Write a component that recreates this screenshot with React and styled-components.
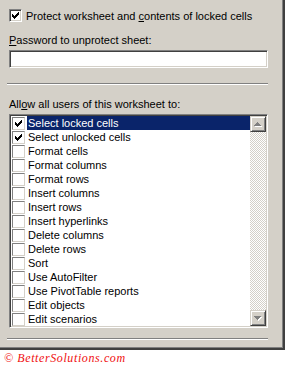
import React from 'react'
import styled, { createGlobalStyle } from 'styled-components'

const Global = createGlobalStyle`
  html, body {
    margin: 0;
    padding: 0;
    background: #ffffff;
  }
`

const Dialog = styled.div`
  box-sizing: border-box;
  width: 285px;
  height: 350px;
  background: #d4d0c8;
  border-right: 2px solid #404040;
  border-bottom: 2px solid #404040;
  box-shadow: inset -1px -1px 0 #808080;
  font-family: Tahoma, "Liberation Sans", Arial, sans-serif;
  font-size: 11px;
  color: #000;
  padding: 9px 0 0 9px;
  display: flex;
  flex-direction: column;
`

const CheckRow = styled.label`
  display: flex;
  align-items: center;
  gap: 4px;
  height: 13px;
`

const Box3D = styled.span`
  box-sizing: border-box;
  width: 13px;
  height: 13px;
  background: #fff;
  border-top: 1px solid #808080;
  border-left: 1px solid #808080;
  border-right: 1px solid #ffffff;
  border-bottom: 1px solid #ffffff;
  box-shadow: inset 1px 1px 0 #404040, inset -1px -1px 0 #d4d0c8;
  display: flex;
  align-items: center;
  justify-content: center;
  flex: none;
`

const Label = styled.div`
  margin-top: ${({ $top }) => $top}px;
  line-height: 14px;
  height: 14px;
  white-space: nowrap;
`

const Key = styled.span`
  text-decoration: underline;
`

const Input = styled.div`
  box-sizing: border-box;
  margin-top: 3px;
  width: 259px;
  height: 18px;
  background: #fff;
  border-top: 1px solid #808080;
  border-left: 1px solid #808080;
  border-right: 1px solid #ffffff;
  border-bottom: 1px solid #ffffff;
  box-shadow: inset 1px 1px 0 #404040, inset -1px -1px 0 #d4d0c8;
`

const Separator = styled.div`
  margin-top: ${({ $top }) => $top}px;
  margin-left: -2px;
  width: 261px;
  height: 1px;
  background: #808080;
  border-bottom: 1px solid #ffffff;
`

const ListBox = styled.div`
  box-sizing: border-box;
  margin-top: 3px;
  width: 259px;
  height: 214px;
  background: #fff;
  border-top: 1px solid #808080;
  border-left: 1px solid #808080;
  border-right: 1px solid #ffffff;
  border-bottom: 1px solid #ffffff;
  box-shadow: inset 1px 1px 0 #404040, inset -1px -1px 0 #d4d0c8;
  padding: 1px;
  display: flex;
`

const Items = styled.div`
  flex: 1;
  overflow: hidden;
`

const Item = styled.div`
  display: flex;
  align-items: center;
  height: 14px;
`

const FlatBox = styled.span`
  box-sizing: border-box;
  width: 13px;
  height: 13px;
  margin: 0 2px 0 1px;
  background: #fff;
  border-top: 1px solid #808080;
  border-left: 1px solid #808080;
  border-right: 1px solid #d4d0c8;
  border-bottom: 1px solid #d4d0c8;
  display: flex;
  align-items: center;
  justify-content: center;
  flex: none;
`

const ItemText = styled.span`
  flex: 1;
  height: 14px;
  line-height: 14px;
  padding-left: 1px;
  white-space: nowrap;
  background: ${({ $selected }) => ($selected ? '#0a246a' : 'transparent')};
  color: ${({ $selected }) => ($selected ? '#ffffff' : '#000000')};
`

const ScrollBar = styled.div`
  width: 16px;
  display: flex;
  flex-direction: column;
  flex: none;
`

const Track = styled.div`
  flex: 1;
  background-image: conic-gradient(#ffffff 25%, #d4d0c8 0 50%, #ffffff 0 75%, #d4d0c8 0);
  background-size: 2px 2px;
`

const ScrollButton = styled.div`
  box-sizing: border-box;
  width: 16px;
  height: 16px;
  background: #d4d0c8;
  border-top: 1px solid #d4d0c8;
  border-left: 1px solid #d4d0c8;
  border-right: 1px solid #404040;
  border-bottom: 1px solid #404040;
  box-shadow: inset 1px 1px 0 #ffffff, inset -1px -1px 0 #808080;
  display: flex;
  align-items: center;
  justify-content: center;
`

const Footer = styled.div`
  padding: 2px 0 0 4px;
  font-family: "Liberation Serif", serif;
  font-style: italic;
  font-size: 12px;
  line-height: 12px;
  letter-spacing: 0.6px;
  color: #f01010;
`

function Check() {
  return (
    <svg width="7" height="7" viewBox="0 0 7 7" shapeRendering="crispEdges">
      <path
        fill="#000"
        d="M6 0h1v1h-1z M5 1h2v1h-2z M0 2h1v1h-1z M4 2h3v1h-3z M0 3h2v1h-2z M3 3h3v1h-3z M0 4h5v1h-5z M1 5h3v1h-3z M2 6h1v1h-1z"
      />
    </svg>
  )
}

function Arrow({ down }) {
  const tri = down ? 'M0 0h7v1h-1v1h-1v1h-1v1h-1v-1h-1v-1h-1v-1h-1z' : 'M3 0h1v1h1v1h1v1h1v1h-7v-1h1v-1h1v-1h1z'
  return (
    <svg width="8" height="5" viewBox="0 0 8 5" shapeRendering="crispEdges">
      <path fill="#ffffff" d={tri} transform="translate(1 1)" />
      <path fill="#808080" d={tri} />
    </svg>
  )
}

const items = [
  ['Select locked cells', true, true],
  ['Select unlocked cells', true, false],
  ['Format cells'],
  ['Format columns'],
  ['Format rows'],
  ['Insert columns'],
  ['Insert rows'],
  ['Insert hyperlinks'],
  ['Delete columns'],
  ['Delete rows'],
  ['Sort'],
  ['Use AutoFilter'],
  ['Use PivotTable reports'],
  ['Edit objects'],
  ['Edit scenarios'],
]

export default function App() {
  return (
    <>
      <Global />
      <Dialog>
        <CheckRow>
          <Box3D>
            <Check />
          </Box3D>
          <span>
            Protect worksheet and <Key>c</Key>ontents of locked cells
          </span>
        </CheckRow>
        <Label $top={11}>
          <Key>P</Key>assword to unprotect sheet:
        </Label>
        <Input />
        <Separator $top={15} />
        <Label $top={12}>
          All<Key>o</Key>w all users of this worksheet to:
        </Label>
        <ListBox>
          <Items>
            {items.map(([text, checked, selected]) => (
              <Item key={text}>
                <FlatBox>{checked && <Check />}</FlatBox>
                <ItemText $selected={selected}>{text}</ItemText>
              </Item>
            ))}
          </Items>
          <ScrollBar>
            <ScrollButton>
              <Arrow />
            </ScrollButton>
            <Track />
            <ScrollButton>
              <Arrow down />
            </ScrollButton>
          </ScrollBar>
        </ListBox>
        <Separator $top={10} />
      </Dialog>
      <Footer>© BetterSolutions.com</Footer>
    </>
  )
}
